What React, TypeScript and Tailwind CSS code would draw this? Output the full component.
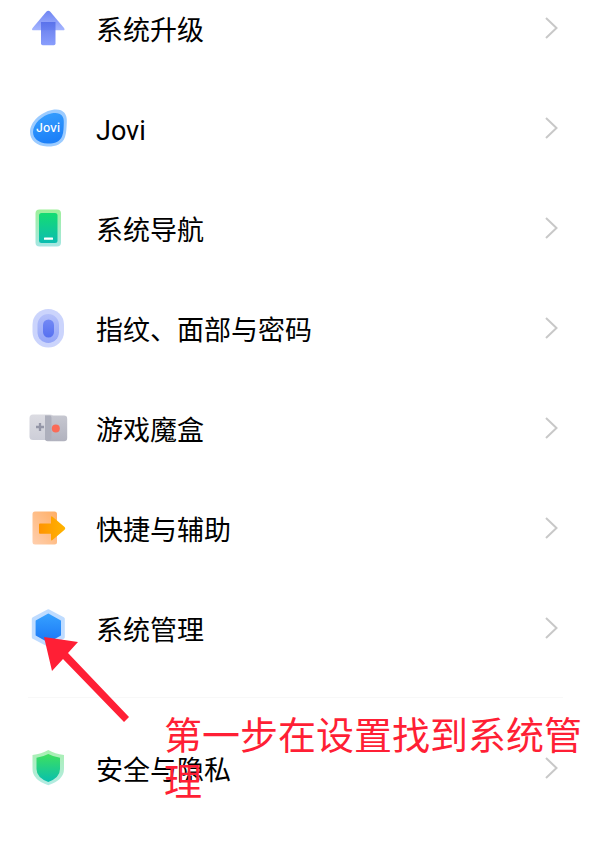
import type { ReactNode } from "react";

function UpgradeIcon() {
  return (
    <svg viewBox="0 0 40 40" className="size-10" aria-hidden="true">
      <defs>
        <linearGradient id="up-head" x1="0" y1="0" x2="0" y2="1">
          <stop offset="0" stopColor="#6f85f3" />
          <stop offset="1" stopColor="#a5b5ff" />
        </linearGradient>
        <linearGradient id="up-stem" x1="0" y1="0" x2="0" y2="1">
          <stop offset="0" stopColor="#546de9" />
          <stop offset="1" stopColor="#7c93fc" />
        </linearGradient>
      </defs>
      <path d="M18.3 3.7Q20.3 2 22.3 3.7L36 20Q37.500 22.300 35 22.300H5.600Q3 22.300 4.600 20Z" fill="url(#up-head)" />
      <path d="M13 14H27.500V35.500Q27.500 37.200 25.800 37.200H14.700Q13 37.200 13 35.500Z" fill="url(#up-stem)" fillOpacity=".9" />
    </svg>
  );
}

function JoviIcon() {
  return (
    <svg viewBox="0 0 40 40" className="size-10" aria-hidden="true">
      <defs>
        <linearGradient id="jovi" x1="0" y1="0" x2="0.300" y2="1">
          <stop offset="0" stopColor="#38a1ff" />
          <stop offset="1" stopColor="#1c80f8" />
        </linearGradient>
      </defs>
      <path d="M24 2C34 0 39.500 5 38.800 14C38.500 20 38.500 24 37 29C34.500 36.500 27 38.800 19 38.500C8.500 38 2 32 2 24C2 14 13 4 24 2Z" fill="#9bcbff" />
      <path d="M24 5.200C32 3.700 36.300 7.500 35.800 14.500C35.600 19 35.800 23.500 34.200 28C32 34 26 35.700 19.500 35.500C10.500 35 5 30.500 5 24C5 16 14 7 24 5.200Z" fill="url(#jovi)" />
      <text x="20" y="24" textAnchor="middle" fontSize="12" fontWeight="500" fontFamily="Inter, sans-serif" fill="white">Jovi</text>
    </svg>
  );
}

function PhoneIcon() {
  return (
    <svg viewBox="0 0 40 40" className="size-10" aria-hidden="true">
      <defs>
        <linearGradient id="ph-outer" x1="0" y1="0" x2="0" y2="1">
          <stop offset="0" stopColor="#9ff09a" />
          <stop offset="1" stopColor="#a5e6e3" />
        </linearGradient>
        <linearGradient id="ph-inner" x1="0" y1="0" x2="0" y2="1">
          <stop offset="0" stopColor="#15dc72" />
          <stop offset="1" stopColor="#0bbdb0" />
        </linearGradient>
      </defs>
      <rect x="7.500" y="1.500" width="25.500" height="37" rx="4" fill="url(#ph-outer)" />
      <rect x="11" y="5" width="18.500" height="30" rx="2.500" fill="url(#ph-inner)" />
      <rect x="16" y="29.500" width="9" height="2.200" rx=".5" fill="white" />
    </svg>
  );
}

function FingerprintIcon() {
  return (
    <svg viewBox="0 0 40 40" className="size-10" aria-hidden="true">
      <defs>
        <linearGradient id="finger" x1="0" y1="0" x2="0" y2="1">
          <stop offset="0" stopColor="#7389f5" />
          <stop offset="1" stopColor="#5670f0" />
        </linearGradient>
        <linearGradient id="finger-mid" x1="0" y1="0" x2="0" y2="1">
          <stop offset="0" stopColor="#b4c0fa" />
          <stop offset="1" stopColor="#93a5f8" />
        </linearGradient>
      </defs>
      <rect x="4.500" y="1" width="31.500" height="38.500" rx="15.750" fill="#cbd4fc" />
      <rect x="9.500" y="6" width="21.500" height="29" rx="10.750" fill="url(#finger-mid)" />
      <rect x="15" y="11.500" width="11" height="18" rx="5.500" fill="url(#finger)" />
    </svg>
  );
}

function GameIcon() {
  return (
    <svg viewBox="0 0 40 40" className="size-10" aria-hidden="true">
      <defs>
        <linearGradient id="game-left" x1="0" y1="0" x2="0" y2="1">
          <stop offset="0" stopColor="#dcdce2" />
          <stop offset="1" stopColor="#cdced8" />
        </linearGradient>
        <linearGradient id="game-right" x1="0" y1="0" x2="0" y2="1">
          <stop offset="0" stopColor="#c6c7d0" />
          <stop offset="1" stopColor="#b1b2be" />
        </linearGradient>
      </defs>
      <rect x="1.500" y="6.500" width="24" height="25.500" rx="3.500" fill="url(#game-left)" />
      <path d="M17 7.500H36Q39.200 7.500 39.200 10.700V30Q39.200 33.200 36 33.200H19.500Q17 33.200 17 30.500Z" fill="url(#game-right)" />
      <path d="M17 7.500H22.500Q23.500 8 23.500 10V29Q23.500 32 21.500 32H17Z" fill="#adafbc" />
      <path d="M12 15V23M8 19H16" stroke="#9496a7" strokeWidth="2.300" />
      <circle cx="27.800" cy="20.500" r="4" fill="#fb6b57" />
    </svg>
  );
}

function ShortcutIcon() {
  return (
    <svg viewBox="0 0 40 40" className="size-10" aria-hidden="true">
      <defs>
        <linearGradient id="short-box" x1="1" y1="0" x2="0" y2="1">
          <stop offset="0" stopColor="#ffae65" />
          <stop offset="1" stopColor="#ffcfae" />
        </linearGradient>
        <linearGradient id="short-arrow" x1="0" y1="0" x2="1" y2="0">
          <stop offset="0" stopColor="#ff9400" />
          <stop offset="1" stopColor="#ffb400" />
        </linearGradient>
      </defs>
      <rect x="4.500" y="3.500" width="24.500" height="33" rx="2.500" fill="url(#short-box)" />
      <path d="M11 16.500Q11 15.500 12 15.500H23V9.200Q23 7.600 24.500 8.800L36.600 19Q38 20.300 36.600 21.700L24.500 32Q23 33 23 31.500V25.800H12Q11 25.800 11 25Z" fill="url(#short-arrow)" />
    </svg>
  );
}

function SystemIcon() {
  return (
    <svg viewBox="0 0 40 40" className="size-10" aria-hidden="true">
      <defs>
        <linearGradient id="system" x1="0" y1="0" x2="0" y2="1">
          <stop offset="0" stopColor="#35a0ff" />
          <stop offset="1" stopColor="#1c78f6" />
        </linearGradient>
      </defs>
      <path d="M20.300 3L35 10.800V29.200L20.300 37L5.600 29.200V10.800Z" fill="#bfdcff" stroke="#bfdcff" strokeWidth="3.600" strokeLinejoin="round" />
      <path d="M20.300 6.500L32 13V27L20.300 33.500L8.600 27V13Z" fill="url(#system)" stroke="url(#system)" strokeWidth="2" strokeLinejoin="round" />
    </svg>
  );
}

function ShieldIcon() {
  return (
    <svg viewBox="0 0 40 40" className="size-10" aria-hidden="true">
      <defs>
        <linearGradient id="sh-outer" x1="0" y1="0" x2="0" y2="1">
          <stop offset="0" stopColor="#a9f0b0" />
          <stop offset="1" stopColor="#b4ebe4" />
        </linearGradient>
        <linearGradient id="sh-inner" x1="0" y1="0" x2="0" y2="1">
          <stop offset="0" stopColor="#3ee05e" />
          <stop offset="1" stopColor="#08bfae" />
        </linearGradient>
      </defs>
      <path d="M20.300 2Q27 6 36 7V21Q36 32 20.300 37.200Q4.500 32 4.500 21V7Q13.500 6 20.300 2Z" fill="url(#sh-outer)" />
      <path d="M20.300 6Q26 9 32 9.800V21Q32 29.500 20.300 34Q8.500 29.500 8.500 21V9.800Q14.500 9 20.300 6Z" fill="url(#sh-inner)" />
    </svg>
  );
}

function Chevron() {
  return (
    <svg viewBox="0 0 14 22" className="h-[22px] w-3.5 shrink-0" fill="none" stroke="#c8c8c8" strokeWidth="2" aria-hidden="true">
      <path d="M1 1L11.500 11L1 21" />
    </svg>
  );
}

function SettingRow({ icon, label }: { icon: ReactNode; label: string }) {
  return (
    <li>
      <button type="button" className="flex h-14 w-full items-center gap-7 pr-8 pl-7 text-left">
        <span className="shrink-0">{icon}</span>
        <span className="flex-1 pt-1.5 text-[27px] leading-8">{label}</span>
        <Chevron />
      </button>
    </li>
  );
}

export default function App() {
  return (
    <main className="relative overflow-hidden bg-white pb-[53px] font-[Roboto,'Noto_Sans_CJK_SC',sans-serif] text-black">
      <ul className="flex flex-col gap-11">
        <SettingRow icon={<UpgradeIcon />} label="系统升级" />
        <SettingRow icon={<JoviIcon />} label="Jovi" />
        <SettingRow icon={<PhoneIcon />} label="系统导航" />
        <SettingRow icon={<FingerprintIcon />} label="指纹、面部与密码" />
        <SettingRow icon={<GameIcon />} label="游戏魔盒" />
        <SettingRow icon={<ShortcutIcon />} label="快捷与辅助" />
        <SettingRow icon={<SystemIcon />} label="系统管理" />
      </ul>
      <hr className="mx-7 mt-[41px] mb-[42px] border-[#f8f8f8]" />
      <ul>
        <SettingRow icon={<ShieldIcon />} label="安全与隐私" />
      </ul>

      <svg viewBox="0 0 88 88" className="absolute top-[635px] left-[42px] size-[88px]" fill="#ff1f35" aria-hidden="true">
        <path d="M2 2L36 7L26 18L87 82L82 87L21 24L10 36Z" />
      </svg>
      <p className="absolute top-[713px] right-0 left-[164px] text-[38px] leading-[46px] text-[#ff1f35]">
        第一步在设置找到系统管理
      </p>
    </main>
  );
}
